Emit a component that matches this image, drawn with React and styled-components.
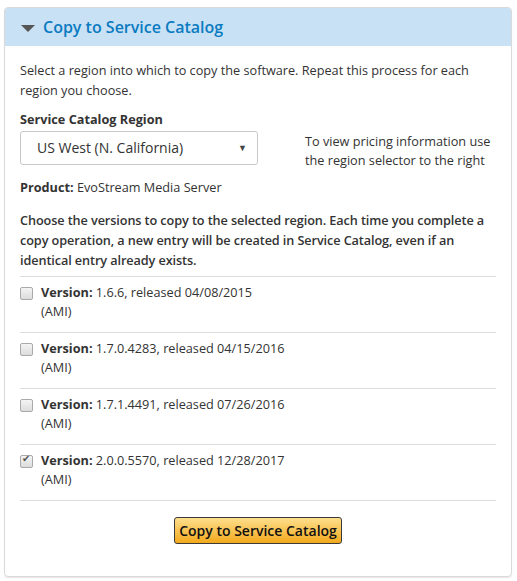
import { useState } from "react";
import styled, { createGlobalStyle } from "styled-components";

const GlobalStyle = createGlobalStyle`
  body {
    margin: 0;
    background: #fff;
    font-family: "Open Sans", "Noto Sans", sans-serif;
    color: #333;
  }
`;

const versions = [
  { id: "1.6.6", date: "04/08/2015" },
  { id: "1.7.0.4283", date: "04/15/2016" },
  { id: "1.7.1.4491", date: "07/26/2016" },
  { id: "2.0.0.5570", date: "12/28/2017" },
];

export default function App() {
  const [checked, setChecked] = useState(["2.0.0.5570"]);
  const toggle = (id) =>
    setChecked((c) => (c.includes(id) ? c.filter((x) => x !== id) : [...c, id]));

  return (
    <Page>
      <GlobalStyle />
      <Card>
        <Header>
          <Caret />
          <Title>Copy to Service Catalog</Title>
        </Header>
        <Body>
          <Text>
            Select a region into which to copy the software. Repeat this process
            for each region you choose.
          </Text>
          <RegionRow>
            <Field>
              <Label>Service Catalog Region</Label>
              <Select>
                <span>US West (N. California)</span>
                <SelectArrow>▼</SelectArrow>
              </Select>
            </Field>
            <Hint>
              To view pricing information use
              <br />
              the region selector to the right
            </Hint>
          </RegionRow>
          <Product>
            <b>Product:</b> EvoStream Media Server
          </Product>
          <Intro>
            Choose the versions to copy to the selected region. Each time you
            complete a copy operation, a new entry will be created in Service
            Catalog, even if an identical entry already exists.
          </Intro>
          <List>
            {versions.map((v) => (
              <Row key={v.id}>
                <Check
                  type="checkbox"
                  checked={checked.includes(v.id)}
                  onChange={() => toggle(v.id)}
                />
                <div>
                  <b>Version:</b> {v.id}, released {v.date}
                  <br />
                  (AMI)
                </div>
              </Row>
            ))}
          </List>
          <Actions>
            <CopyButton>Copy to Service Catalog</CopyButton>
          </Actions>
        </Body>
      </Card>
    </Page>
  );
}

const Page = styled.div`
  padding: 7px 5px 4px 4px;
`;

const Card = styled.div`
  border: 1px solid #dadada;
  border-radius: 4px;
  box-shadow: 0 1px 1px #e6e6e6;
  overflow: hidden;
`;

const Header = styled.div`
  display: flex;
  align-items: center;
  gap: 8px;
  height: 38px;
  padding: 0 16px;
  background: #c9e1f4;
`;

const Caret = styled.span`
  width: 0;
  height: 0;
  border-left: 7px solid transparent;
  border-right: 7px solid transparent;
  border-top: 7px solid #555;
  margin-top: 2px;
`;

const Title = styled.div`
  font-size: 16px;
  font-weight: 600;
  color: #0a7bc1;
  margin-top: -1px;
`;

const Body = styled.div`
  padding: 14px 15px 32px 15px;
  font-size: 12.7px;
  line-height: 20px;
`;

const Text = styled.div`
  margin-bottom: 9px;
`;

const RegionRow = styled.div`
  display: flex;
  align-items: flex-start;
  margin-bottom: 7px;
`;

const Field = styled.div`
  display: flex;
  flex-direction: column;
  gap: 2px;
`;

const Label = styled.div`
  font-weight: 700;
`;

const Select = styled.div`
  display: flex;
  align-items: center;
  justify-content: space-between;
  box-sizing: border-box;
  width: 238px;
  height: 34px;
  padding: 0 10px 0 16px;
  border: 1px solid #c8c8c8;
  border-radius: 3px;
  font-size: 14px;
`;

const SelectArrow = styled.span`
  font-size: 9px;
  color: #444;
`;

const Hint = styled.div`
  margin: 23px 0 0 47px;
  line-height: 19px;
`;

const Product = styled.div`
  margin-bottom: 13px;
`;

const Intro = styled.div`
  font-weight: 600;
  letter-spacing: -0.1px;
  margin-bottom: 6px;
`;

const List = styled.div`
  border-top: 1px solid #ddd;
`;

const Row = styled.label`
  display: flex;
  align-items: flex-start;
  gap: 8px;
  padding: 6px 0 11px 0;
  line-height: 19px;
  border-bottom: 1px solid #ddd;
`;

const Check = styled.input`
  appearance: none;
  flex: none;
  width: 13px;
  height: 13px;
  margin: 4px 0 0 0;
  border: 1px solid #aaa;
  border-radius: 2px;
  background: linear-gradient(#f4f4f4, #dcdcdc);
  position: relative;
  &:checked::after {
    content: "✔";
    position: absolute;
    left: 1px;
    top: -3px;
    font-size: 10px;
    color: #555;
  }
`;

const Actions = styled.div`
  display: flex;
  justify-content: center;
  margin-top: 16px;
`;

const CopyButton = styled.button`
  font-family: inherit;
  font-size: 14px;
  font-weight: 600;
  color: #111;
  height: 27px;
  padding: 0 4px;
  border: 1px solid #3a3a3a;
  border-radius: 3px;
  background: linear-gradient(#fedf8d, #f3a91c);
  cursor: pointer;
`;
